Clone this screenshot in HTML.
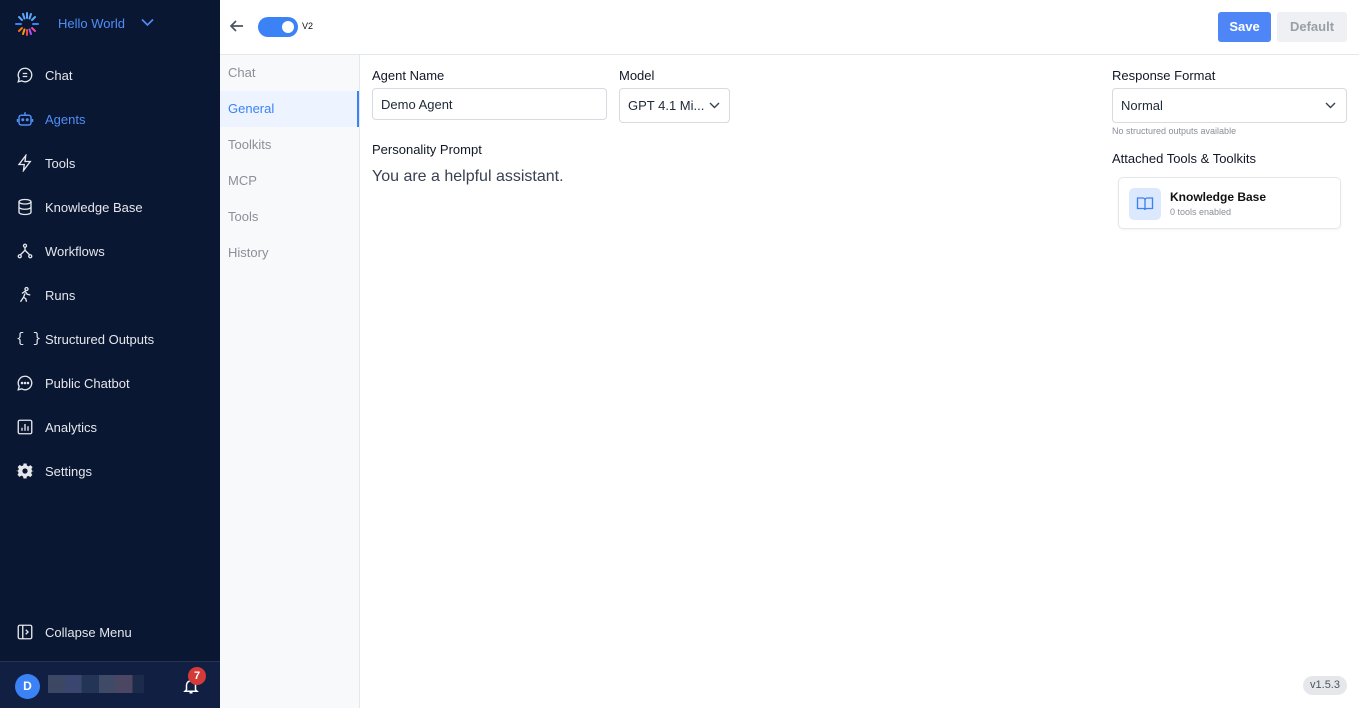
<!DOCTYPE html>
<html><head><meta charset="utf-8"><style>
*{box-sizing:border-box;margin:0;padding:0}
body{width:1359px;height:708px;overflow:hidden;font-family:"Liberation Sans",sans-serif;background:#fff;position:relative;font-size:13px;color:#1f2937}
.sb{position:absolute;left:0;top:0;width:220px;height:708px;background:#0a1733;color:#e5e7eb}
.item{position:absolute;left:0;width:220px;height:44px;display:flex;align-items:center;font-size:13px;white-space:nowrap}
.item svg{position:absolute;left:16px;width:18px;height:18px}
.item span{position:absolute;left:45px;white-space:nowrap}
.user{position:absolute;left:0;top:661px;width:220px;height:47px;background:#111f42;border-top:1px solid #253252}
.sub{position:absolute;left:220px;top:55px;width:140px;height:653px;background:#f8f9fb;border-right:1px solid #e5e7eb}
.sub div{height:36px;line-height:36px;padding-left:8px;color:#8a8f98;font-size:13px}
.lbl{position:absolute;font-size:13px;color:#111827;white-space:nowrap}
.inp{position:absolute;border:1px solid #d6dae1;border-radius:4px;font-size:13px;display:flex;align-items:center;padding-left:8px;white-space:nowrap}
</style></head><body>
<div class="sb">
 <svg style="position:absolute;left:14px;top:11px" width="26" height="26" viewBox="0 0 26 26"><g stroke-width="2" stroke-linecap="round">
 <line x1="13" y1="2" x2="13" y2="7" stroke="#60a5fa"/><line x1="9" y1="3" x2="10.5" y2="7.5" stroke="#60a5fa"/><line x1="17" y1="3" x2="15.5" y2="7.5" stroke="#60a5fa"/><line x1="5" y1="6" x2="8" y2="9" stroke="#60a5fa"/><line x1="21" y1="6" x2="18" y2="9" stroke="#60a5fa"/><line x1="2" y1="13" x2="7" y2="13" stroke="#3b82f6"/><line x1="19" y1="13" x2="24" y2="13" stroke="#3b82f6"/><line x1="5" y1="20" x2="8" y2="17" stroke="#f97316"/><line x1="21" y1="20" x2="18" y2="17" stroke="#ec4899"/><line x1="9" y1="23" x2="10.5" y2="18.5" stroke="#f59e0b"/><line x1="17" y1="23" x2="15.5" y2="18.5" stroke="#a855f7"/><line x1="13" y1="24" x2="13" y2="19" stroke="#ef4444"/></g></svg>
 <div style="position:absolute;left:58px;top:16px;color:#4f8ef7;font-size:13px">Hello World</div>
 <svg style="position:absolute;left:141px;top:18px" width="13" height="9" viewBox="0 0 13 9"><path d="M1 1.5l5.5 5.5 5.5-5.5" stroke="#4f8ef7" stroke-width="1.6" fill="none"/></svg>
 <div class="item" style="top:53px"><svg viewBox="0 0 24 24" fill="none" stroke="#e5e7eb" stroke-width="1.8"><path d="M12 3a9 9 0 1 1-4.5 16.8L3 21l1.2-4.5A9 9 0 0 1 12 3z"/><path d="M9 10h6M9 14h6"/></svg><span>Chat</span></div>
 <div class="item" style="top:97px;color:#4f8ef7"><svg viewBox="0 0 24 24" fill="none" stroke="#4f8ef7" stroke-width="2"><rect x="4" y="7" width="16" height="13" rx="3"/><path d="M12 3v4M2 12v4M22 12v4"/><circle cx="9" cy="13" r="1" fill="#4f8ef7"/><circle cx="15" cy="13" r="1" fill="#4f8ef7"/></svg><span>Agents</span></div>
 <div class="item" style="top:141px"><svg viewBox="0 0 24 24" fill="none" stroke="#e5e7eb" stroke-width="1.8"><path d="M13 2L4 14h7l-1 8 9-12h-7z"/></svg><span>Tools</span></div>
 <div class="item" style="top:185px"><svg viewBox="0 0 24 24" fill="none" stroke="#e5e7eb" stroke-width="1.8"><ellipse cx="12" cy="5" rx="8" ry="3"/><path d="M4 5v14c0 1.7 3.6 3 8 3s8-1.3 8-3V5M4 12c0 1.7 3.6 3 8 3s8-1.3 8-3"/></svg><span>Knowledge Base</span></div>
 <div class="item" style="top:229px"><svg viewBox="0 0 24 24" fill="none" stroke="#e5e7eb" stroke-width="1.8"><circle cx="12" cy="5" r="2"/><circle cx="5" cy="19" r="2"/><circle cx="19" cy="19" r="2"/><path d="M12 7v4l-6 6M12 11l6 6"/></svg><span>Workflows</span></div>
 <div class="item" style="top:273px"><svg viewBox="0 0 24 24" fill="none" stroke="#e5e7eb" stroke-width="1.8"><circle cx="14" cy="4" r="2"/><path d="M6 21l4-6 3 2 1 4M8 10l4-3 3 4 4 1M10 15l2-5"/></svg><span>Runs</span></div>
 <div class="item" style="top:317px"><span style="left:16px;font-family:'Liberation Mono',monospace;font-size:14px">{ }</span><span>Structured Outputs</span></div>
 <div class="item" style="top:361px"><svg viewBox="0 0 24 24" fill="none" stroke="#e5e7eb" stroke-width="1.8"><path d="M12 3a9 9 0 1 1-4.5 16.8L3 21l1.2-4.5A9 9 0 0 1 12 3z"/><circle cx="8" cy="12" r=".8" fill="#e5e7eb"/><circle cx="12" cy="12" r=".8" fill="#e5e7eb"/><circle cx="16" cy="12" r=".8" fill="#e5e7eb"/></svg><span>Public Chatbot</span></div>
 <div class="item" style="top:405px"><svg viewBox="0 0 24 24" fill="none" stroke="#e5e7eb" stroke-width="1.8"><rect x="3" y="3" width="18" height="18" rx="2"/><path d="M8 17v-4M12 17V8M16 17v-6"/></svg><span>Analytics</span></div>
 <div class="item" style="top:449px"><svg viewBox="0 0 24 24" fill="#e5e7eb"><path d="M10 2h4l.6 2.8 2.3 1 2.4-1.6 2.8 2.8-1.6 2.4 1 2.3L24 12v0l-2.8.6-1 2.3 1.6 2.4-2.8 2.8-2.4-1.6-2.3 1L14 22h-4l-.6-2.8-2.3-1-2.4 1.6-2.8-2.8 1.6-2.4-1-2.3L0 12l2.8-.6 1-2.3L2.2 6.7 5 3.9l2.4 1.6 2.3-1zM12 8.5a3.5 3.5 0 1 0 0 7 3.5 3.5 0 0 0 0-7z"/></svg><span>Settings</span></div>
 <div class="item" style="top:610px"><svg viewBox="0 0 24 24" fill="none" stroke="#e5e7eb" stroke-width="1.8"><rect x="3" y="3" width="18" height="18" rx="2"/><path d="M9 3v18M13 9l3 3-3 3"/></svg><span>Collapse Menu</span></div>
 <div class="user">
  <div style="position:absolute;left:15px;top:12px;width:25px;height:25px;border-radius:50%;background:#3b82f6;color:#fff;font-weight:bold;font-size:12px;text-align:center;line-height:25px">D</div>
  <div style="position:absolute;left:48px;top:13px;width:96px;height:18px;background:linear-gradient(90deg,#3c4763 0 18%,#3b4670 18% 35%,#233556 35% 53%,#3e4a66 53% 70%,#4b4661 70% 88%,#1c2b4c 88%)"></div>
  <svg style="position:absolute;left:182px;top:15px" width="18" height="18" viewBox="0 0 24 24" fill="none" stroke="#fff" stroke-width="2"><path d="M6 17V11a6 6 0 0 1 12 0v6l2 2H4zM10 21h4"/></svg>
  <div style="position:absolute;left:188px;top:5px;width:18px;height:18px;border-radius:50%;background:#d33a3a;color:#fff;font-size:11px;font-weight:bold;text-align:center;line-height:18px">7</div>
 </div>
</div>
<div style="position:absolute;left:220px;top:54px;width:1139px;height:1px;background:#e5e7eb"></div>
<svg style="position:absolute;left:229px;top:18px" width="16" height="16" viewBox="0 0 16 16"><path d="M14 8H2M7 3L2 8l5 5" stroke="#4b5563" stroke-width="1.7" fill="none"/></svg>
<div style="position:absolute;left:258px;top:17px;width:40px;height:20px;border-radius:10px;background:#3b82f6"><div style="position:absolute;right:4px;top:4px;width:12px;height:12px;border-radius:50%;background:#fff"></div></div>
<div style="position:absolute;left:302px;top:21px;font-size:9px;color:#111">V2</div>
<div style="position:absolute;left:1218px;top:12px;width:53px;height:30px;background:#4f86f7;border-radius:3px;color:#fff;font-weight:bold;text-align:center;line-height:30px">Save</div>
<div style="position:absolute;left:1277px;top:12px;width:70px;height:30px;background:#eef0f3;border-radius:3px;color:#9aa0a8;font-weight:bold;text-align:center;line-height:30px">Default</div>
<div class="sub"><div>Chat</div><div style="background:#eef4ff;color:#3b82f6;border-right:2px solid #3b82f6">General</div><div>Toolkits</div><div>MCP</div><div>Tools</div><div>History</div></div>
<div class="lbl" style="left:372px;top:68px">Agent Name</div>
<div class="inp" style="left:372px;top:88px;width:235px;height:32px">Demo Agent</div>
<div class="lbl" style="left:619px;top:68px">Model</div>
<div class="inp" style="left:619px;top:88px;width:111px;height:35px">GPT 4.1 Mi...<svg style="position:absolute;right:9px;top:13px" width="11" height="7" viewBox="0 0 11 7"><path d="M1 1l4.5 4.5L10 1" stroke="#374151" stroke-width="1.4" fill="none"/></svg></div>
<div class="lbl" style="left:372px;top:142px">Personality Prompt</div>
<div style="position:absolute;left:372px;top:168px;font-size:16px;color:#374151">You are a helpful assistant.</div>
<div class="lbl" style="left:1112px;top:68px">Response Format</div>
<div class="inp" style="left:1112px;top:88px;width:235px;height:35px">Normal<svg style="position:absolute;right:10px;top:13px" width="11" height="7" viewBox="0 0 11 7"><path d="M1 1l4.5 4.5L10 1" stroke="#374151" stroke-width="1.4" fill="none"/></svg></div>
<div style="position:absolute;left:1112px;top:126px;font-size:9px;color:#8a8f98">No structured outputs available</div>
<div class="lbl" style="left:1112px;top:151px">Attached Tools &amp; Toolkits</div>
<div style="position:absolute;left:1118px;top:177px;width:223px;height:52px;border:1px solid #e5e7eb;border-radius:5px;box-shadow:0 1px 2px rgba(0,0,0,.05)">
 <div style="position:absolute;left:10px;top:10px;width:32px;height:32px;background:#dbe8fd;border-radius:5px"><svg style="position:absolute;left:7px;top:7px" width="18" height="18" viewBox="0 0 24 24" fill="none" stroke="#3b82f6" stroke-width="1.8"><path d="M2 4h7a3 3 0 0 1 3 3v13a2 2 0 0 0-2-2H2zM22 4h-7a3 3 0 0 0-3 3v13a2 2 0 0 1 2-2h8z"/></svg></div>
 <div style="position:absolute;left:51px;top:12px;font-weight:bold;font-size:12px;color:#111">Knowledge Base</div>
 <div style="position:absolute;left:51px;top:29px;font-size:9px;color:#8a8f98">0 tools enabled</div>
</div>
<div style="position:absolute;left:1303px;top:676px;width:44px;height:19px;border-radius:10px;background:#e5e7eb;color:#4b5563;font-size:11px;text-align:center;line-height:19px">v1.5.3</div>
</body></html>
